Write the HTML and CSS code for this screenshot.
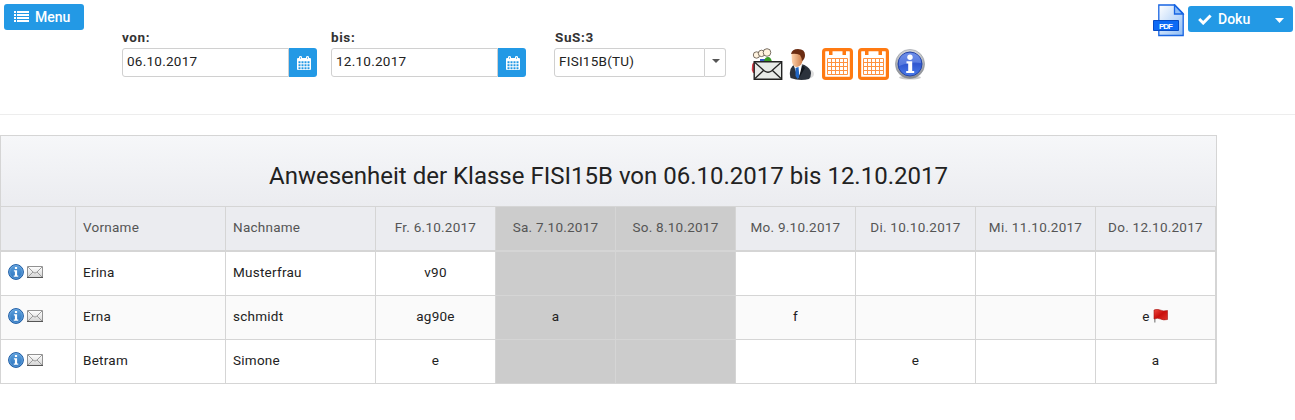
FILE: index.html
```html
<!DOCTYPE html>
<html lang="de">
<head>
<meta charset="utf-8">
<title>Anwesenheit</title>
<link rel="stylesheet" href="styles.css">
</head>
<body>
<svg class="defs" width="0" height="0">
  <defs>
    <linearGradient id="info-blue" x1="0" y1="0" x2="0" y2="1"><stop offset="0" stop-color="#5b9fdc"/><stop offset="1" stop-color="#2a72bd"/></linearGradient>
    <linearGradient id="royal" x1="0" y1="0" x2="0" y2="1"><stop offset="0" stop-color="#5c80e6"/><stop offset=".5" stop-color="#2f56d0"/><stop offset="1" stop-color="#4a7bea"/></linearGradient>
    <linearGradient id="silver" x1="0" y1="0" x2="0" y2="1"><stop offset="0" stop-color="#d4d6da"/><stop offset="1" stop-color="#85888e"/></linearGradient>
    <linearGradient id="paper" x1="0" y1="0" x2="1" y2="1"><stop offset="0" stop-color="#fff"/><stop offset="1" stop-color="#8fbdf5"/></linearGradient>
    <linearGradient id="face" x1="0" y1="0" x2="1" y2="0"><stop offset="0" stop-color="#ffd3ac"/><stop offset="1" stop-color="#c97540"/></linearGradient>
    <linearGradient id="envelope" x1="0" y1="0" x2="0" y2="1"><stop offset="0" stop-color="#fff"/><stop offset="1" stop-color="#d4d4d4"/></linearGradient>
    <linearGradient id="flagred" x1="0" y1="0" x2="1" y2="1"><stop offset="0" stop-color="#ef4a40"/><stop offset=".5" stop-color="#c90f0c"/><stop offset="1" stop-color="#e0352c"/></linearGradient>
    <symbol id="cal" viewBox="0 0 14 14">
      <path fill="#fff" d="M1 2h12q1 0 1 1v10q0 1-1 1H1q-1 0-1-1V3q0-1 1-1zM2 1q0-1 1.500-1T5 1v2H2zM9 1q0-1 1.500-1T12 1v2H9z"/>
      <path stroke="#2399e5" stroke-width=".6" d="M3.500 1v2M10.500 1v2"/>
      <path fill="none" stroke="#2399e5" stroke-width="1.900" stroke-dasharray="2 1" d="M1.500 6.200h12M1.500 9.200h12M1.500 12.200h12"/>
    </symbol>
    <symbol id="info" viewBox="0 0 16 16">
      <circle cx="8" cy="8" r="7.4" fill="url(#info-blue)" stroke="#1c5ba3" stroke-width="1"/>
      <circle cx="8" cy="8" r="6.4" fill="none" stroke="#8abceb" stroke-width=".5"/>
      <path fill="#fff" d="M6.900 3h2.200v2.100H6.900zM5.900 6.300h3.200v5.300h1.200v1.100H5.700v-1.100h1.200V7.400h-1z"/>
    </symbol>
    <symbol id="mail" viewBox="0 0 16 12">
      <path fill="url(#envelope)" stroke="#929292" d="M.5.500h15v11H.5z"/>
      <path fill="none" stroke="#929292" stroke-width=".9" d="M1 1l5.200 5.200Q8 8 9.800 6.200L15 1M1 11l5-5M15 11l-5-5"/>
      <path stroke="#555" d="M0 11.500h16"/>
    </symbol>
    <symbol id="orange-cal" viewBox="0 0 31 32">
      <rect x="1.600" y="1.600" width="27.800" height="28.800" rx="2.200" fill="#fff" stroke="#ff7a12" stroke-width="3.200"/>
      <path fill="#ff7a12" d="M7 1h3.500v6H7zM20.500 1H24v6h-3.500z"/>
      <path fill="none" stroke="#ff9240" d="M5.500 10.500h20v16h-20zM9.500 10.500v16M13.500 10.500v16M17.500 10.500v16M21.500 10.500v16M5.500 14.500h20M5.500 18.500h20M5.500 22.500h20"/>
    </symbol>
  </defs>
</svg>

<header class="toolbar">
  <button class="btn menu">
    <svg width="15" height="12" viewBox="0 0 15 12"><path fill="#fff" d="M0 0h2v2H0zM3 0h12v2H3zM0 3h2v2H0zM3 3h12v2H3zM0 6h2v2H0zM3 6h12v2H3zM0 9h2v2H0zM3 9h12v2H3z"/></svg>
    <span>Menu</span>
  </button>
  <div class="field von">
    <label>von:</label>
    <div class="control"><span class="value">06.10.2017</span><span class="picker"><svg width="14" height="14"><use href="#cal"/></svg></span></div>
  </div>
  <div class="field bis">
    <label>bis:</label>
    <div class="control"><span class="value">12.10.2017</span><span class="picker"><svg width="14" height="14"><use href="#cal"/></svg></span></div>
  </div>
  <div class="field sus">
    <label>SuS:3</label>
    <div class="control select"><span class="value">FISI15B(TU)</span><span class="arrow"><svg width="8" height="4" viewBox="0 0 8 4"><path fill="#555" d="M0 0h8L4 4z"/></svg></span></div>
  </div>
  <div class="actions">
    <svg class="group-mail" width="32" height="33" viewBox="0 0 32 33">
      <path fill="#d83945" d="M1 18q0-4 4-4v11H2q-2-3-1-7z"/>
      <path fill="#3559c7" d="M9 11h6v4H9z"/><path fill="#359c25" d="M13 13q1-4 4-4t4 5z"/>
      <g fill="#fff3df" stroke="#574b40" stroke-width=".8"><circle cx="5.500" cy="7" r="3.200"/><circle cx="10.500" cy="5.400" r="3.200"/><circle cx="16" cy="4.500" r="3.800"/></g>
      <path fill="#e7eae8" stroke="#222" stroke-width="1.400" d="M3.200 13.700h27.500v17.500H3.200z"/>
      <path fill="none" stroke="#222" stroke-width="1.300" d="M4 14.500l9.500 8.500q3.500 2.500 7 0l9.500-8.500M4 30.500l8.500-8M30 30.500l-8.500-8"/>
    </svg>
    <svg class="person" width="27" height="33" viewBox="0 0 27 33">
      <ellipse cx="18" cy="26" rx="7" ry="5" fill="#ccc" opacity=".65"/>
      <path fill="#2b323c" d="M1.500 30Q-.500 22 3.500 18l5-3 7 2q6 3 6.500 8 0 4-2 6-9 2.500-18.500-1z"/>
      <path fill="#fff" d="M5 18l8-2 1 4-5 10z"/><path fill="#2166c3" d="M6.500 20l3-1 1 10-2 2-2-3z"/>
      <path fill="url(#face)" d="M2.500 6q6-4 12 1l-1 6q-1 5-5.500 6-4 0-5-5z"/>
      <path fill="#6b2c12" d="M2 6Q3 1 9 1q7 0 7 6 0 4-3 6-.500-4-2-6-4-2-9-1z"/>
      <path fill="#11161d" d="M13 17l3 3-6 10z"/>
    </svg>
    <svg class="oc1" width="31" height="32"><use href="#orange-cal"/></svg>
    <svg class="oc2" width="31" height="32"><use href="#orange-cal"/></svg>
    <svg class="big-info" width="30" height="31" viewBox="0 0 30 31">
      <ellipse cx="15" cy="28.500" rx="11" ry="2" fill="#aaa" opacity=".6"/>
      <circle cx="15" cy="15" r="14.600" fill="url(#silver)" stroke="#868a91" stroke-width=".5"/>
      <circle cx="15" cy="15" r="12" fill="url(#royal)" stroke="#2746a6"/>
      <path fill="#87a3ef" opacity=".45" d="M4 14Q4 4 15 4t11 10q-10-2-22 3z"/>
      <circle cx="15" cy="8.300" r="2.700" fill="#fff"/><path fill="#fff" d="M11.500 12.300h5.700V22h2v2h-8v-2h2v-7.500h-1.700z"/>
    </svg>
  </div>
  <div class="export">
    <svg width="32" height="33" viewBox="0 0 32 33">
      <path fill="url(#paper)" stroke="#1764e2" stroke-width="1.300" d="M5.800 1h16L30.200 9.500V31.500H5.800z"/>
      <path fill="#8dbdf8" stroke="#1764e2" stroke-width="1.300" d="M21.500 1v9H30z"/>
      <path fill="#0d6af5" stroke="#064bc4" d="M.5 16.500h25v10H.5z"/>
      <text class="pdf-label" x="6" y="24.500" textLength="14">PDF</text>
    </svg>
    <button class="btn doku">
      <svg width="14" height="11" viewBox="0 0 14 11"><path fill="none" stroke="#fff" stroke-width="3" d="M1.200 5l4 4L12.600 1.500"/></svg>
      <span>Doku</span>
      <svg class="caret" width="9" height="5" viewBox="0 0 9 5"><path fill="#fff" d="M0 0h9L4.500 5z"/></svg>
    </button>
  </div>
</header>

<main class="attendance">
  <h1>Anwesenheit der Klasse FISI15B von 06.10.2017 bis 12.10.2017</h1>
  <table>
    <colgroup><col class="c-icons"><col class="c-name"><col class="c-name"><col span="7" class="c-day"></colgroup>
    <thead>
      <tr><th></th><th>Vorname</th><th>Nachname</th><th class="day">Fr. 6.10.2017</th><th class="day weekend">Sa. 7.10.2017</th><th class="day weekend">So. 8.10.2017</th><th class="day">Mo. 9.10.2017</th><th class="day">Di. 10.10.2017</th><th class="day">Mi. 11.10.2017</th><th class="day">Do. 12.10.2017</th></tr>
    </thead>
    <tbody>
      <tr><td><div class="icons"><svg width="16" height="16"><use href="#info"/></svg><svg width="16" height="12"><use href="#mail"/></svg></div></td><td>Erina</td><td>Musterfrau</td><td class="day">v90</td><td class="day weekend"></td><td class="day weekend"></td><td class="day"></td><td class="day"></td><td class="day"></td><td class="day"></td></tr>
      <tr><td><div class="icons"><svg width="16" height="16"><use href="#info"/></svg><svg width="16" height="12"><use href="#mail"/></svg></div></td><td>Erna</td><td>schmidt</td><td class="day">ag90e</td><td class="day weekend">a</td><td class="day weekend"></td><td class="day">f</td><td class="day"></td><td class="day"></td><td class="day"><div class="flagged"><span>e</span><svg width="16" height="14" viewBox="0 0 16 14"><path stroke="#999" stroke-width="1.500" d="M1.800 3v10.500"/><path fill="url(#flagred)" stroke="#a51512" stroke-width=".6" d="M1 1q3-1.500 6 0t7.500.500v9q-4 1-7-.500T1 10z"/></svg></div></td></tr>
      <tr><td><div class="icons"><svg width="16" height="16"><use href="#info"/></svg><svg width="16" height="12"><use href="#mail"/></svg></div></td><td>Betram</td><td>Simone</td><td class="day">e</td><td class="day weekend"></td><td class="day weekend"></td><td class="day"></td><td class="day">e</td><td class="day"></td><td class="day">a</td></tr>
    </tbody>
  </table>
</main>
</body>
</html>
```
FILE: styles.css
```css
* { box-sizing: border-box; }
body { margin: 0; background: #fff; color: #222; font: 13.5px/20px Roboto, sans-serif; letter-spacing: .25px; }
svg { display: block; flex: none; }
.defs { position: absolute; }
.toolbar { display: flex; align-items: flex-start; height: 115px; border-bottom: 1px solid #ededed; }
.btn { display: flex; align-items: center; height: 26px; padding: 0 10px; border: 0; border-radius: 3px; background: #2399e5; color: #fff; font: 500 14px/20px Roboto, sans-serif; }
.menu { width: 80px; margin: 4px 38px 0 4px; gap: 6px; }
.field { margin-top: 27px; }
.field label { display: block; height: 21px; color: #333; font-weight: 700; letter-spacing: .6px; }
.von { width: 195px; margin-right: 14px; }
.bis { width: 195px; margin-right: 28px; }
.sus { width: 172px; }
.sus label { padding-left: 1px; }
.control { display: flex; height: 29px; }
.value { flex: 1; padding: 2px 4px; border: 1px solid #d0d0d0; border-radius: 3px 0 0 3px; }
.picker { display: flex; align-items: center; justify-content: center; width: 28px; padding: 1px 0 0 2px; border-radius: 0 3px 3px 0; background: #2399e5; }
.arrow { display: flex; justify-content: center; width: 21px; padding: 10px 0 0 1px; border: 1px solid #d0d0d0; border-left: 0; border-radius: 0 3px 3px 0; }
.actions { display: flex; align-items: flex-start; margin: 48px 0 0 25px; }
.person { margin: 0 0 0 6px; }
.oc1 { margin-left: 6px; }
.oc2 { margin-left: 5px; }
.big-info { margin: 1px 0 0 6px; }
.export { display: flex; gap: 3px; margin: 4px 2px 0 auto; }
.doku { width: 105px; margin-top: 2px; gap: 6px; }
.caret { margin: 2px -1px 0 auto; }
.pdf-label { fill: #fff; font: 700 8px "Liberation Sans", sans-serif; letter-spacing: 0; }
.attendance { width: 1217px; margin-top: 20px; border: 1px solid #d5d5d5; }
h1 { height: 71px; margin: 0; padding-top: 25px; border-bottom: 1px solid #d5d5d5; background: linear-gradient(#f6f7f9, #ebecf0); color: #222; font: 400 24px/30px Roboto, sans-serif; letter-spacing: 0; text-align: center; }
table { width: 1215px; table-layout: fixed; border-collapse: separate; border-spacing: 0; }
.c-icons { width: 75px; }
.c-name { width: 150px; }
.c-day { width: 120px; }
th, td { height: 44px; padding: 0 7px 4px; border-right: 1px solid #d5d5d5; border-bottom: 1px solid #d5d5d5; text-align: left; vertical-align: middle; }
th { background: #ebecf0; color: #555; font-weight: 400; }
tbody tr:first-child td { height: 45px; border-top: 1px solid #d5d5d5; }
tbody tr:nth-child(2) td { background: #fafafa; }
tbody tr:last-child td { height: 43px; border-bottom: 0; }
.day { text-align: center; }
th.weekend, tbody tr td.weekend { background: #ccc; }
.icons { display: flex; align-items: center; gap: 3px; padding-top: 1px; }
.flagged { display: flex; align-items: center; justify-content: center; gap: 3px; }
```
